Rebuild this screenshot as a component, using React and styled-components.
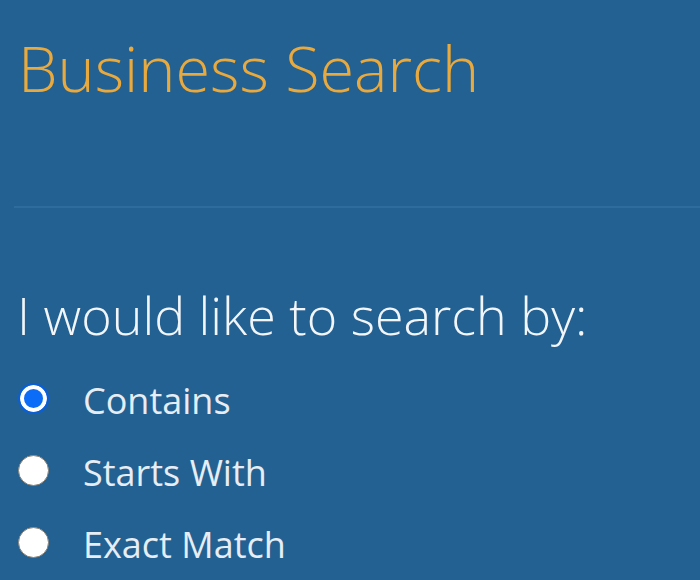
import React, { useState } from "react"
import styled, { createGlobalStyle } from "styled-components"

const GlobalStyle = createGlobalStyle`
  html, body {
    margin: 0;
    padding: 0;
    background: #236192;
  }
  body {
    font-family: "Open Sans", "Noto Sans", sans-serif;
  }
`

const Page = styled.div`
  width: 700px;
  height: 580px;
  overflow: hidden;
  background: #236192;
  box-sizing: border-box;
  padding: 27px 0 0 0;
`

const Title = styled.h1`
  margin: 0 0 0 18px;
  font-size: 63px;
  font-weight: 300;
  line-height: 82px;
  color: #e9a93c;
`

const Divider = styled.hr`
  margin: 97px 0 0 14px;
  border: none;
  height: 2px;
  background: #2d6c9c;
`

const Prompt = styled.h2`
  margin: 75px 0 0 17px;
  font-size: 52px;
  font-weight: 300;
  line-height: 64px;
  color: #f2f6fa;
`

const Options = styled.div`
  display: flex;
  flex-direction: column;
  gap: 28px;
  margin: 32px 0 0 18px;
`

const Option = styled.label`
  display: flex;
  align-items: center;
  gap: 34px;
  height: 44px;
  line-height: 44px;
  font-size: 36px;
  font-weight: 400;
  color: #e6edf4;
  cursor: pointer;
`

const Radio = styled.input.attrs({ type: "radio" })`
  appearance: none;
  margin: 0 0 6px 0;
  width: 31px;
  height: 31px;
  border-radius: 50%;
  background: #ffffff;
  border: 1.5px solid #8a8378;
  box-sizing: border-box;
  flex: none;

  &:checked {
    background: #0b6cf7;
    border: 2px solid #0a5fd6;
    box-shadow: inset 0 0 0 4px #ffffff;
  }
`

const choices = ["Contains", "Starts With", "Exact Match"]

export default function App() {
  const [mode, setMode] = useState("Contains")
  return (
    <Page>
      <GlobalStyle />
      <Title>Business Search</Title>
      <Divider />
      <Prompt>I would like to search by:</Prompt>
      <Options>
        {choices.map(c => (
          <Option key={c}>
            <Radio name="mode" checked={mode === c} onChange={() => setMode(c)} />
            {c}
          </Option>
        ))}
      </Options>
    </Page>
  )
}
